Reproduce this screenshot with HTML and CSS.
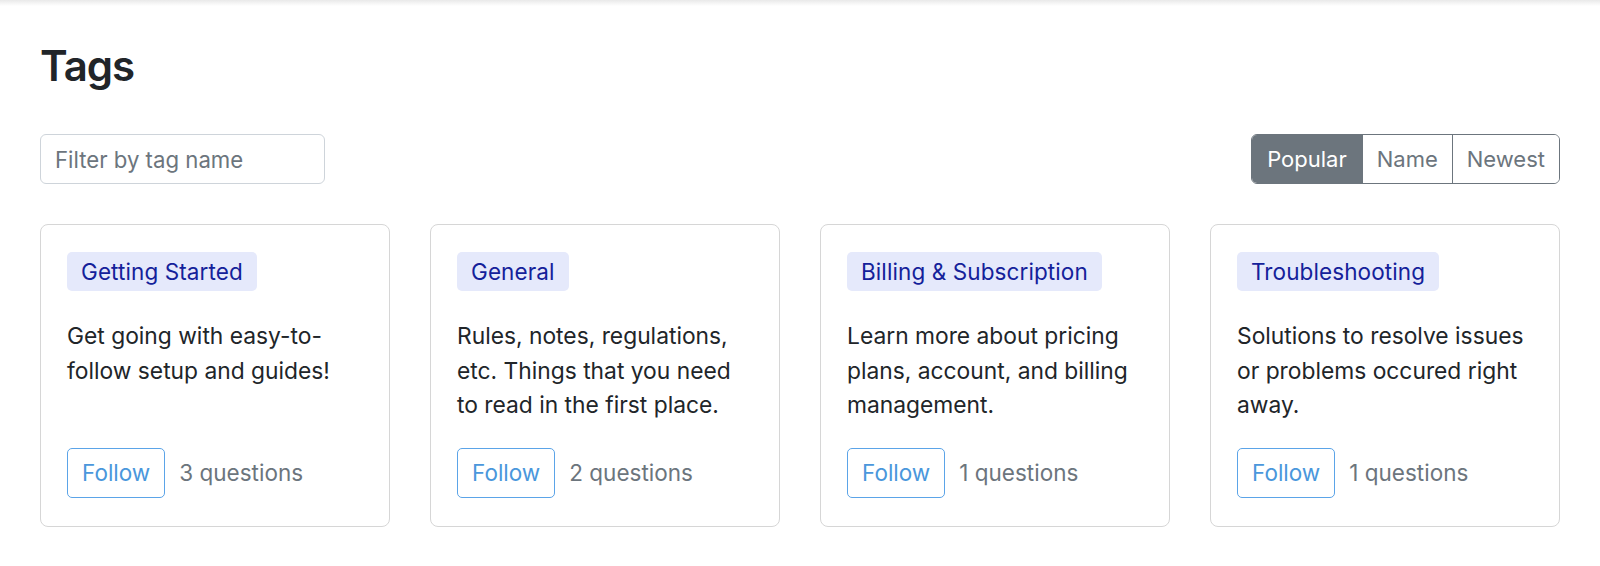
FILE: index.html
```html
<!DOCTYPE html>
<html lang="en">
<head>
<meta charset="utf-8">
<title>Tags</title>
<link rel="stylesheet" href="styles.css">
</head>
<body>
<div class="topshade"></div>
<main class="page">
  <h1 class="title">Tags</h1>
  <div class="toolbar">
    <input class="filter" type="text" placeholder="Filter by tag name">
    <div class="sort">
      <button class="sort-btn active">Popular</button>
      <button class="sort-btn">Name</button>
      <button class="sort-btn">Newest</button>
    </div>
  </div>
  <div class="cards">
    <div class="card">
      <span class="badge">Getting Started</span>
      <p class="desc">Get going with easy-to-follow setup and guides!</p>
      <div class="foot"><button class="follow">Follow</button><span class="count">3 questions</span></div>
    </div>
    <div class="card">
      <span class="badge">General</span>
      <p class="desc">Rules, notes, regulations, etc. Things that you need to read in the first place.</p>
      <div class="foot"><button class="follow">Follow</button><span class="count">2 questions</span></div>
    </div>
    <div class="card">
      <span class="badge">Billing &amp; Subscription</span>
      <p class="desc">Learn more about pricing plans, account, and billing management.</p>
      <div class="foot"><button class="follow">Follow</button><span class="count">1 questions</span></div>
    </div>
    <div class="card">
      <span class="badge">Troubleshooting</span>
      <p class="desc">Solutions to resolve issues or problems occured right away.</p>
      <div class="foot"><button class="follow">Follow</button><span class="count">1 questions</span></div>
    </div>
  </div>
</main>
</body>
</html>
```

FILE: styles.css
```css
* { box-sizing: border-box; }
html, body { margin: 0; padding: 0; background: #fff; }
body {
  font-family: "Inter", "Noto Sans", "Liberation Sans", sans-serif;
  color: #212529;
  font-size: 22px;
}
.topshade {
  height: 6px;
  background: linear-gradient(#e9e9e9, #fff);
}
.page {
  padding: 0 40px;
}
.title {
  margin: 34px 0 0;
  font-size: 42px;
  font-weight: 600;
  line-height: 52px;
  letter-spacing: -1px;
}
.toolbar {
  margin-top: 42px;
  display: flex;
  justify-content: space-between;
  align-items: center;
}
.filter {
  width: 285px;
  height: 50px;
  border: 1px solid #ced4da;
  border-radius: 6px;
  padding: 0 14px;
  font-family: inherit;
  font-size: 22.2px;
  color: #212529;
  outline: none;
}
.filter::placeholder { color: #6c757d; }
.sort {
  display: flex;
  height: 50px;
  border: 1px solid #6c757d;
  border-radius: 6px;
  overflow: hidden;
}
.sort-btn {
  font-family: inherit;
  font-size: 22px;
  background: #fff;
  color: #6c757d;
  border: 0;
  border-left: 1px solid #6c757d;
  padding: 0 14px;
  height: 100%;
}
.sort-btn:first-child { border-left: 0; }
.sort-btn.active { background: #6c757d; color: #fff; padding: 0 15px; }
.cards {
  margin-top: 40px;
  display: grid;
  grid-template-columns: repeat(4, 1fr);
  gap: 40px;
}
.card {
  border: 1px solid #d6d6d6;
  border-radius: 8px;
  padding: 27px 26px 28px;
  display: flex;
  flex-direction: column;
  align-items: flex-start;
}
.badge {
  background: #e5e9fb;
  color: #14219a;
  border-radius: 5px;
  padding: 0 14px;
  height: 39px;
  line-height: 39px;
  font-size: 22.5px;
  letter-spacing: 0.1px;
}
.desc {
  margin: 28px 0 25px;
  line-height: 34.5px;
  font-size: 22.8px;
}
.foot {
  margin-top: auto;
  display: flex;
  align-items: center;
  gap: 14px;
}
.follow {
  font-family: inherit;
  font-size: 22.5px;
  color: #4a97dc;
  background: #fff;
  border: 1px solid #5ba4e8;
  border-radius: 5px;
  height: 50px;
  padding: 0 14px;
}
.count {
  color: #6c757d;
  font-size: 22.5px;
}
```
